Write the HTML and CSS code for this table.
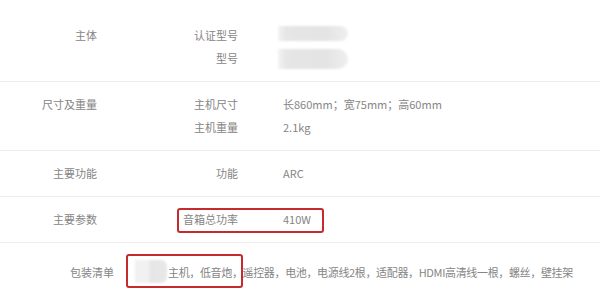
FILE: index.html
```html
<!DOCTYPE html>
<html lang="zh-CN">
<head>
  <meta charset="UTF-8">
  <title>规格与包装</title>
  <link rel="stylesheet" href="styles.css">
</head>
<body>
  <div class="specs">

    <!-- 主体 -->
    <div class="group">
      <div class="group-name">主体</div>
      <dl class="items">
        <div class="item"><dt>认证型号</dt><dd><span class="blur blur-sm"></span></dd></div>
        <div class="item"><dt>型号</dt><dd><span class="blur"></span></dd></div>
      </dl>
    </div>

    <!-- 尺寸及重量 -->
    <div class="group">
      <div class="group-name">尺寸及重量</div>
      <dl class="items">
        <div class="item"><dt>主机尺寸</dt><dd>长860mm；宽75mm；高60mm</dd></div>
        <div class="item"><dt>主机重量</dt><dd>2.1kg</dd></div>
      </dl>
    </div>

    <!-- 主要功能 -->
    <div class="group">
      <div class="group-name">主要功能</div>
      <dl class="items">
        <div class="item"><dt>功能</dt><dd>ARC</dd></div>
      </dl>
    </div>

    <!-- 主要参数 -->
    <div class="group">
      <div class="group-name">主要参数</div>
      <dl class="items">
        <div class="item"><dt>音箱总功率</dt><dd>410W</dd></div>
      </dl>
      <span class="mark mark-power"></span>
    </div>

    <!-- 包装清单 -->
    <div class="group pack">
      <div class="group-name">包装清单</div>
      <div class="pack-list"><span class="blur blur-box"></span>主机，低音炮，遥控器，电池，电源线2根，适配器，HDMI高清线一根，螺丝，壁挂架</div>
      <span class="mark mark-pack"></span>
    </div>

  </div>
</body>
</html>
```

FILE: styles.css
```css
/* Base */
body {
  margin: 0;
  background: #fff;
  color: #858585;
  font-family: "Noto Sans CJK SC", "Microsoft YaHei", sans-serif;
  font-size: 11px;
}

.specs {
  padding-top: 13px;
}

/* Spec group rows */
.group {
  position: relative;
  display: grid;
  grid-template-columns: 97px 1fr;
  padding: 11px 0;
  border-bottom: 1px solid #ededed;
  line-height: 23px;
}

.group-name {
  text-align: right;
}

.items {
  margin: 0;
}

.item {
  display: grid;
  grid-template-columns: 141px 1fr;
  column-gap: 45px;
}

.item dt {
  text-align: right;
}

.item dd {
  margin: 0;
  display: flex;
  align-items: center;
}

/* Blurred-out values */
.blur {
  display: inline-block;
  width: 70px;
  height: 20px;
  margin-left: -5px;
  border-radius: 0 10px 10px 0;
  background: linear-gradient(90deg, #f3f3f3 0%, #e6e6e6 12%, #e4e4e4 70%, #efefef 100%);
  filter: blur(1px);
}

.blur-sm {
  height: 15px;
  margin-top: -4px;
}

/* Packing list */
.pack {
  grid-template-columns: 114px 1fr;
  column-gap: 21px;
  padding: 18px 0 14px;
  border-bottom: none;
}

.pack-list {
  display: flex;
  align-items: center;
  white-space: nowrap;
  letter-spacing: -0.35px;
}

.blur-box {
  width: 32px;
  height: 23px;
  margin: -3px 1px 0 0;
  border-radius: 0 6px 6px 0;
  background: linear-gradient(90deg, #f1f1f1 0%, #f1f1f1 40%, #e6e6e6 50%, #e8e8e8 100%);
}

/* Red annotation boxes */
.mark {
  position: absolute;
  box-sizing: border-box;
  border: 2px solid #c52a2e;
  border-radius: 3px;
}

.mark-power {
  left: 177px;
  top: 11px;
  width: 147px;
  height: 25px;
}

.mark-pack {
  left: 126px;
  top: 11px;
  width: 117px;
  height: 34px;
}
```
